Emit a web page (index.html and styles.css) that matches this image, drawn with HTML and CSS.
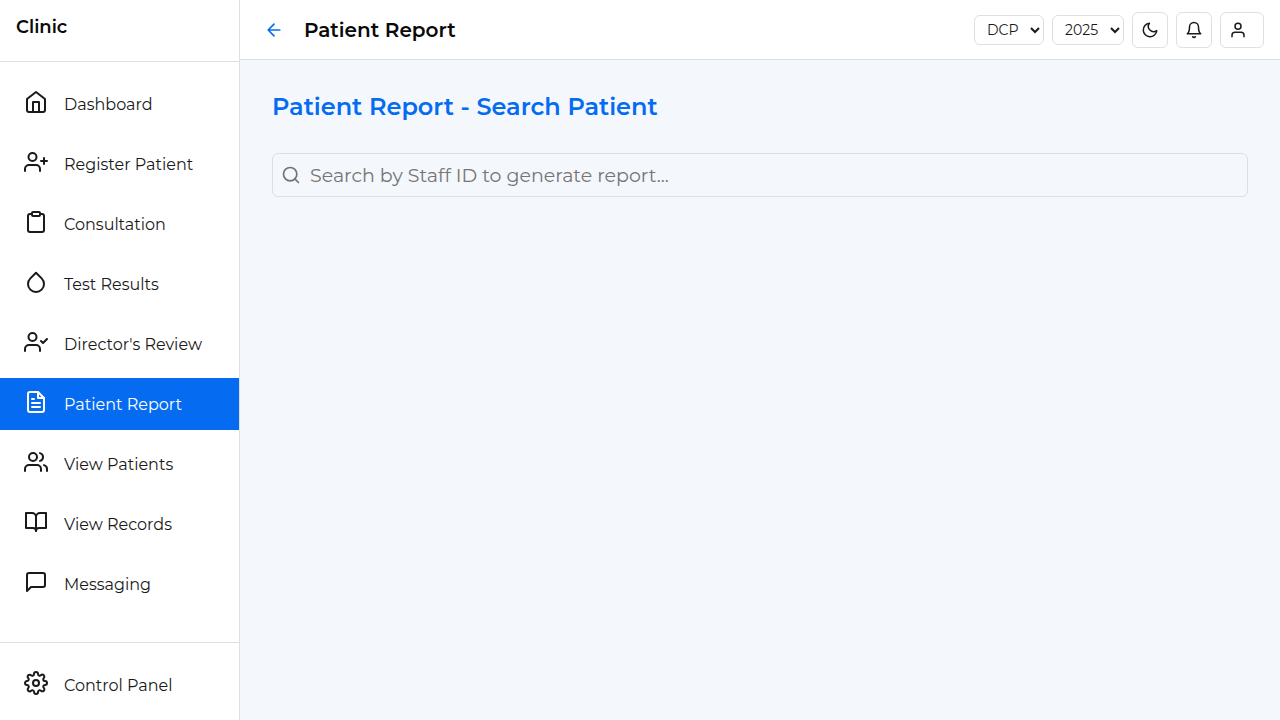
FILE: index.html
```html
<!DOCTYPE html>
<html lang="en">
<head>
<meta charset="utf-8">
<meta name="viewport" content="width=device-width, initial-scale=1">
<title>Patient Report</title>
<link rel="stylesheet" href="styles.css">
</head>
<body>
<div class="app">
  <aside class="sidebar">
    <div class="brand">Clinic</div>
    <nav class="nav" aria-label="Main">
      <a class="nav-item" href="#"><svg class="icon" viewBox="0 0 24 24"><path d="M3 9l9-7 9 7v11a2 2 0 0 1-2 2H5a2 2 0 0 1-2-2z"/><path d="M9 22V12h6v10"/></svg><span>Dashboard</span></a>
      <a class="nav-item" href="#"><svg class="icon" viewBox="0 0 24 24"><path d="M16 21v-2a4 4 0 0 0-4-4H5a4 4 0 0 0-4 4v2"/><circle cx="8.5" cy="7" r="4"/><path d="M20 8v6M23 11h-6"/></svg><span>Register Patient</span></a>
      <a class="nav-item" href="#"><svg class="icon" viewBox="0 0 24 24"><path d="M16 4h2a2 2 0 0 1 2 2v14a2 2 0 0 1-2 2H6a2 2 0 0 1-2-2V6a2 2 0 0 1 2-2h2"/><rect x="8" y="2" width="8" height="4" rx="1"/></svg><span>Consultation</span></a>
      <a class="nav-item" href="#"><svg class="icon" viewBox="0 0 24 24"><path d="M12 2.69l5.66 5.66a8 8 0 1 1-11.31 0z"/></svg><span>Test Results</span></a>
      <a class="nav-item" href="#"><svg class="icon" viewBox="0 0 24 24"><path d="M16 21v-2a4 4 0 0 0-4-4H5a4 4 0 0 0-4 4v2"/><circle cx="8.5" cy="7" r="4"/><path d="M17 11l2 2 4-4"/></svg><span>Director's Review</span></a>
      <a class="nav-item active" href="#" aria-current="page"><svg class="icon" viewBox="0 0 24 24"><path d="M14 2H6a2 2 0 0 0-2 2v16a2 2 0 0 0 2 2h12a2 2 0 0 0 2-2V8z"/><path d="M14 2v6h6M16 13H8M16 17H8M10 9H8"/></svg><span>Patient Report</span></a>
      <a class="nav-item" href="#"><svg class="icon" viewBox="0 0 24 24"><path d="M17 21v-2a4 4 0 0 0-4-4H5a4 4 0 0 0-4 4v2"/><circle cx="9" cy="7" r="4"/><path d="M23 21v-2a4 4 0 0 0-3-3.87M16 3.13a4 4 0 0 1 0 7.75"/></svg><span>View Patients</span></a>
      <a class="nav-item" href="#"><svg class="icon" viewBox="0 0 24 24"><path d="M2 3h6a4 4 0 0 1 4 4v14a3 3 0 0 0-3-3H2z"/><path d="M22 3h-6a4 4 0 0 0-4 4v14a3 3 0 0 1 3-3h7z"/></svg><span>View Records</span></a>
      <a class="nav-item" href="#"><svg class="icon" viewBox="0 0 24 24"><path d="M21 15a2 2 0 0 1-2 2H7l-4 4V5a2 2 0 0 1 2-2h14a2 2 0 0 1 2 2z"/></svg><span>Messaging</span></a>
    </nav>
    <div class="sidebar-footer">
      <a class="nav-item" href="#"><svg class="icon" viewBox="0 0 24 24"><circle cx="12" cy="12" r="3"/><path d="M19.4 15a1.65 1.65 0 0 0 .33 1.82l.06.06a2 2 0 0 1 0 2.83 2 2 0 0 1-2.83 0l-.06-.06a1.65 1.65 0 0 0-1.82-.33 1.65 1.65 0 0 0-1 1.51V21a2 2 0 0 1-2 2 2 2 0 0 1-2-2v-.09A1.65 1.65 0 0 0 9 19.4a1.65 1.65 0 0 0-1.82.33l-.06.06a2 2 0 0 1-2.83 0 2 2 0 0 1 0-2.83l.06-.06a1.65 1.65 0 0 0 .33-1.82 1.65 1.65 0 0 0-1.51-1H3a2 2 0 0 1-2-2 2 2 0 0 1 2-2h.09A1.65 1.65 0 0 0 4.6 9a1.65 1.65 0 0 0-.33-1.82l-.06-.06a2 2 0 0 1 0-2.83 2 2 0 0 1 2.83 0l.06.06a1.65 1.65 0 0 0 1.82.33H9a1.65 1.65 0 0 0 1-1.51V3a2 2 0 0 1 2-2 2 2 0 0 1 2 2v.09a1.65 1.65 0 0 0 1 1.51 1.65 1.65 0 0 0 1.82-.33l.06-.06a2 2 0 0 1 2.83 0 2 2 0 0 1 0 2.83l-.06.06a1.65 1.65 0 0 0-.33 1.82V9a1.65 1.65 0 0 0 1.51 1H21a2 2 0 0 1 2 2 2 2 0 0 1-2 2h-.09a1.65 1.65 0 0 0-1.51 1z"/></svg><span>Control Panel</span></a>
    </div>
  </aside>
  <div class="content">
    <header class="topbar">
      <button class="back" type="button" aria-label="Back"><svg class="icon icon-md" viewBox="0 0 24 24"><path d="M19 12H5M12 19l-7-7 7-7"/></svg></button>
      <h1 class="page-title">Patient Report</h1>
      <div class="tools">
        <select class="picker" aria-label="Clinic location"><option>DCP</option></select>
        <select class="picker picker-year" aria-label="Year"><option>2025</option></select>
        <button class="tool" type="button" aria-label="Dark mode"><svg class="icon icon-sm" viewBox="0 0 24 24"><path d="M21 12.79A9 9 0 1 1 11.21 3 7 7 0 0 0 21 12.79z"/></svg></button>
        <button class="tool" type="button" aria-label="Notifications"><svg class="icon icon-sm" viewBox="0 0 24 24"><path d="M18 8A6 6 0 0 0 6 8c0 7-3 9-3 9h18s-3-2-3-9M13.73 21a2 2 0 0 1-3.46 0"/></svg></button>
        <button class="tool tool-user" type="button" aria-label="Account"><svg class="icon icon-sm" viewBox="0 0 24 24"><path d="M20 21v-2a4 4 0 0 0-4-4H8a4 4 0 0 0-4 4v2"/><circle cx="12" cy="7" r="4"/></svg></button>
      </div>
    </header>
    <main class="main">
      <h2 class="heading">Patient Report - Search Patient</h2>
      <label class="search">
        <svg class="icon icon-md" viewBox="0 0 24 24" aria-hidden="true"><circle cx="11" cy="11" r="8"/><path d="M21 21l-4.35-4.35"/></svg>
        <input class="search-input" type="text" aria-label="Staff ID" placeholder="Search by Staff ID to generate report...">
      </label>
    </main>
  </div>
</div>
</body>
</html>
```
FILE: styles.css
```css
* {
  box-sizing: border-box;
}

body {
  margin: 0;
  background: #f4f7fc;
  color: #1a1a1a;
  font-family: Montserrat, Inter, "Open Sans", sans-serif;
  font-size: 16px;
}

button,
input,
select {
  font: inherit;
  color: inherit;
}

.app {
  display: flex;
  min-height: 100vh;
}

.icon {
  flex: none;
  width: 24px;
  height: 24px;
  fill: none;
  stroke: currentColor;
  stroke-width: 2;
  stroke-linecap: round;
  stroke-linejoin: round;
}

.icon-md {
  width: 20px;
  height: 20px;
}

.icon-sm {
  width: 18px;
  height: 18px;
}

.sidebar {
  display: flex;
  flex: none;
  flex-direction: column;
  width: 240px;
  background: #fff;
  border-right: 1px solid #dedfe0;
}

.brand {
  padding: 16px 16px 23px;
  border-bottom: 1px solid #dedfe0;
  color: #0a0a0a;
  font-size: 18px;
  font-weight: 600;
  line-height: 22px;
}

.nav {
  display: flex;
  flex: 1;
  flex-direction: column;
  gap: 8px;
  padding: 16px 0;
}

.nav-item {
  display: flex;
  align-items: flex-start;
  gap: 16px;
  padding: 12px 24px 10px;
  color: inherit;
  line-height: 30px;
  text-decoration: none;
}

.active {
  background: #056cf2;
  color: #fff;
}

.sidebar-footer {
  padding: 16px 0 9px;
  border-top: 1px solid #dedfe0;
}

.content {
  flex: 1;
  min-width: 0;
}

.topbar {
  display: flex;
  align-items: center;
  height: 60px;
  padding: 0 16px;
  background: #fff;
  border-bottom: 1px solid #dedfe0;
}

.back {
  display: flex;
  padding: 8px;
  border: 0;
  background: none;
  color: #056cf2;
}

.page-title {
  flex: 1;
  margin: 0 0 0 12px;
  color: #0a0a0a;
  font-size: 20px;
  font-weight: 600;
  line-height: 28px;
}

.tools {
  display: flex;
  align-items: center;
  gap: 8px;
}

.picker {
  width: 70px;
  height: 30px;
  padding: 0 0 0 8px;
  border: 1px solid #dedfe0;
  border-radius: 6px;
  background: #fff;
  font-size: 14px;
}

.picker-year {
  width: 72px;
}

.tool {
  display: flex;
  padding: 8px;
  border: 1px solid #dedfe0;
  border-radius: 6px;
  background: #fff;
}

.tool-user {
  padding-right: 16px;
}

.main {
  padding: 32px;
}

.heading {
  margin: 0 0 31px;
  color: #056cf2;
  font-size: 24px;
  font-weight: 600;
  line-height: 30px;
}

.search {
  display: flex;
  align-items: center;
  gap: 9px;
  padding: 0 8px;
  border: 1px solid #dedfe0;
  border-radius: 6px;
  color: #6c757d;
}

.search-input {
  flex: 1;
  min-width: 0;
  height: 42px;
  padding: 0;
  border: 0;
  outline: 0;
  background: none;
  color: #1a1a1a;
  font-size: 19px;
}

.search-input::placeholder {
  color: #757575;
}
```
